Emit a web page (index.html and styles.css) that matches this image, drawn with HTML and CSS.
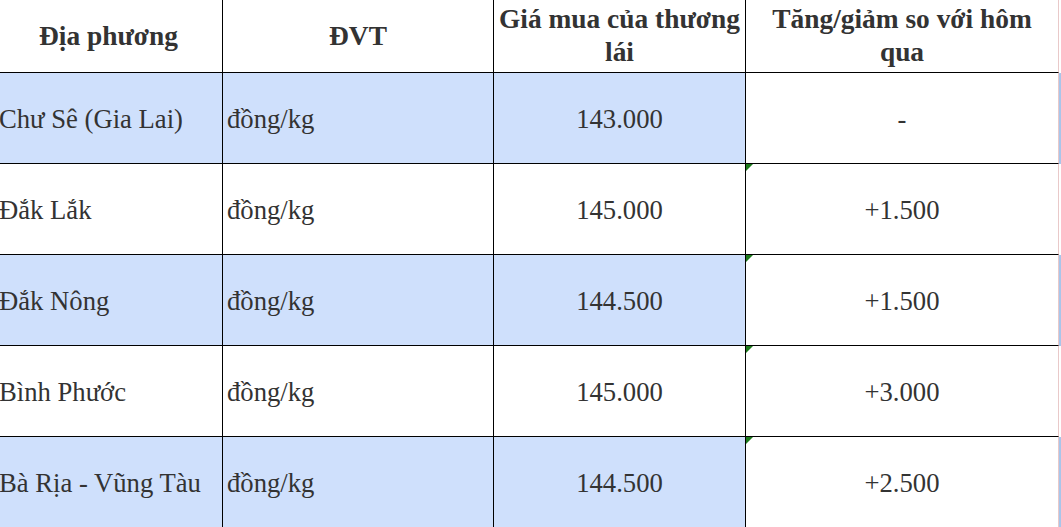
FILE: index.html
```html
<!DOCTYPE html>
<html lang="vi">
<head>
<meta charset="utf-8">
<title>Giá cà phê</title>
<link rel="stylesheet" href="styles.css">
</head>
<body>
<div class="sheet">
  <div class="cell head">Địa phương</div>
  <div class="cell head">ĐVT</div>
  <div class="cell head">Giá mua của thương lái</div>
  <div class="cell head last">Tăng/giảm so với hôm qua</div>
  <div class="edge"></div>

  <div class="cell left blue">Chư Sê (Gia Lai)</div>
  <div class="cell left blue">đồng/kg</div>
  <div class="cell center blue">143.000</div>
  <div class="cell center last">-</div>
  <div class="edge blue-edge"></div>

  <div class="cell left">Đắk Lắk</div>
  <div class="cell left">đồng/kg</div>
  <div class="cell center">145.000</div>
  <div class="cell center last flag">+1.500</div>
  <div class="edge"></div>

  <div class="cell left blue">Đắk Nông</div>
  <div class="cell left blue">đồng/kg</div>
  <div class="cell center blue">144.500</div>
  <div class="cell center last flag">+1.500</div>
  <div class="edge blue-edge"></div>

  <div class="cell left">Bình Phước</div>
  <div class="cell left">đồng/kg</div>
  <div class="cell center">145.000</div>
  <div class="cell center last flag">+3.000</div>
  <div class="edge"></div>

  <div class="cell left blue">Bà Rịa - Vũng Tàu</div>
  <div class="cell left blue">đồng/kg</div>
  <div class="cell center blue">144.500</div>
  <div class="cell center last flag">+2.500</div>
  <div class="edge blue-edge"></div>
</div>
</body>
</html>
```
FILE: styles.css
```css
html, body {
  margin: 0;
  padding: 0;
  background: #ffffff;
  overflow: hidden;
}

.sheet {
  display: grid;
  grid-template-columns: 228px 271px 252px 313px 3px;
  grid-template-rows: 73px repeat(5, 91px);
  margin-left: -5px;
  width: 1067px;
  font-family: "Liberation Serif", "Times New Roman", serif;
  font-size: 26.67px;
  color: #333333;
}

.cell {
  box-sizing: border-box;
  border-right: 1px solid #000000;
  border-bottom: 1px solid #000000;
  display: flex;
  align-items: center;
  white-space: nowrap;
  position: relative;
  background: #ffffff;
}

.cell.last {
  border-right-color: #e9c9c9;
}

.head {
  font-weight: bold;
  font-size: 27.4px;
  justify-content: center;
  text-align: center;
  white-space: normal;
  line-height: 33px;
  padding: 0 4px;
}

.left {
  padding-left: 4px;
  padding-top: 3px;
}

.center {
  justify-content: center;
  padding-top: 3px;
}

.blue {
  background: #cfe0fc;
}

.edge {
  background: #ffffff;
}

.blue-edge {
  background: #a9c5ea;
}

.flag::before {
  content: "";
  position: absolute;
  top: 0;
  left: 0;
  width: 0;
  height: 0;
  border-top: 7px solid #1b7a1b;
  border-right: 7px solid transparent;
}
```
